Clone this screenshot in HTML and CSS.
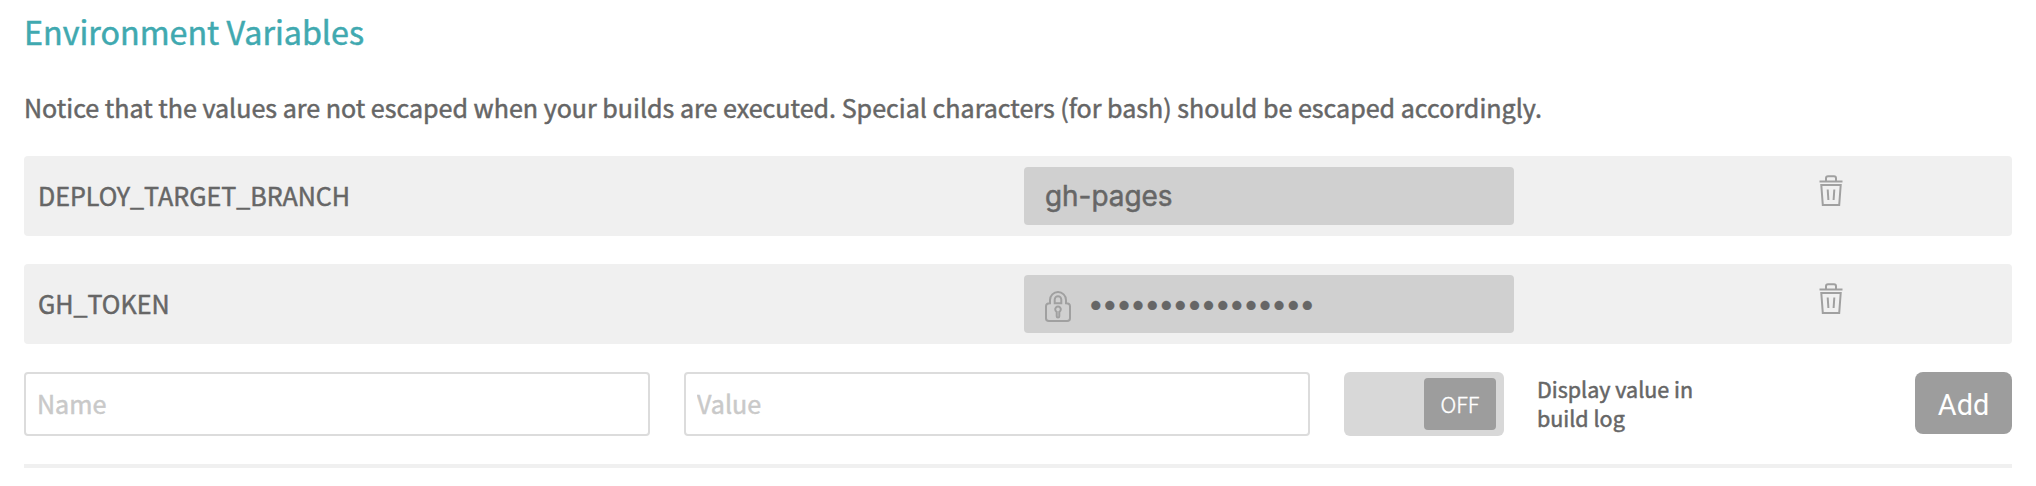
FILE: index.html
```html
<!DOCTYPE html>
<html lang="en">
<head>
<meta charset="utf-8">
<title>Environment Variables</title>
<link rel="stylesheet" href="styles.css">
</head>
<body>
<svg class="sprite" aria-hidden="true">
  <symbol id="trash" viewBox="0 0 24 32">
    <path d="M.5 7.500h23M7 7V4.200q0-2 2-2h6q2 0 2 2V7M2.300 11h19.400L20.200 31H3.800zM8.700 15.500l.7 10.500M15.300 15.500l-.7 10.500"/>
  </symbol>
  <symbol id="lock" viewBox="0 0 26 31">
    <path d="M5 12.200V9a8 8 0 0 1 16 0v3.200q4 .2 4 3v12q0 2.800-2.800 2.800H3.800Q1 30 1 27.200V15.200q0-2.800 4-3zM9.700 12.200V8.500a3.300 3.300 0 0 1 6.600 0v3.700zM11.700 20.800a2.800 2.800 0 1 1 2.600 0v4.400q0 1.200-1.300 1.200t-1.300-1.200z"/>
  </symbol>
</svg>
<main class="settings">
  <h1 class="title">Environment Variables</h1>
  <p class="notice">Notice that the values are not escaped when your builds are executed. Special characters (for bash) should be escaped accordingly.</p>
  <ul class="vars">
    <li class="var">
      <span class="var-name">DEPLOY_TARGET_BRANCH</span>
      <span class="var-value">gh-pages</span>
      <svg class="icon trash"><use href="#trash"/></svg>
    </li>
    <li class="var">
      <span class="var-name">GH_TOKEN</span>
      <span class="var-value"><svg class="icon lock"><use href="#lock"/></svg><span class="secret">••••••••••••••••</span></span>
      <svg class="icon trash"><use href="#trash"/></svg>
    </li>
  </ul>
  <form class="add-form">
    <input class="field" type="text" placeholder="Name">
    <input class="field" type="text" placeholder="Value">
    <div class="switch"><span class="knob">OFF</span></div>
    <span class="switch-label">Display value in build log</span>
    <button class="add" type="button">Add</button>
  </form>
</main>
</body>
</html>
```
FILE: styles.css
```css
* { box-sizing: border-box; }
body {
  margin: 0;
  background: #fff;
  color: #666;
  font-family: "Noto Sans CJK SC", sans-serif;
  font-size: 25.07px;
  -webkit-text-stroke: 0.5px currentColor;
}
.sprite { display: none; }
.settings { padding: 8px 24px 0; }
.title {
  margin: 0;
  color: #40a9b0;
  font-size: 32.25px;
  font-weight: 400;
  line-height: 46px;
}
.notice { margin: 35px 0 31px; line-height: 36px; white-space: nowrap; }
.vars {
  display: grid;
  gap: 28px;
  margin: 0;
  padding: 0;
  list-style: none;
}
.var {
  display: flex;
  align-items: center;
  height: 80px;
  padding-left: 14px;
  border-radius: 4px;
  background: #f0f0f0;
}
.var-name { width: 986px; padding-bottom: 2px; line-height: 36px; }
.var-value {
  display: flex;
  align-items: center;
  width: 490px;
  height: 58px;
  padding-left: 21px;
  border-radius: 4px;
  background: #d0d0d0;
  font-family: Inter, sans-serif;
  font-size: 27.9px;
}
.icon { fill: none; stroke: #a0a0a0; stroke-width: 2; }
.trash { width: 24px; height: 32px; margin: -12px 0 0 305px; }
.lock { width: 26px; height: 31px; margin-top: 5px; }
.secret {
  margin: 4px 0 0 19px;
  font-family: "Liberation Sans", sans-serif;
  font-size: 33px;
  letter-spacing: 2.55px;
  -webkit-text-stroke-width: 0.2px;
}
.add-form {
  display: flex;
  align-items: flex-start;
  margin-top: 28px;
  padding-bottom: 28px;
  border-bottom: 4px solid #f0f0f0;
}
.field {
  width: 626px;
  height: 64px;
  margin-right: 34px;
  padding: 0 10px 2px 11px;
  border: 2px solid #dcdcdc;
  border-radius: 4px;
  background: #fff;
  color: #666;
  font: inherit;
}
.field::placeholder { color: #c9c9c9; opacity: 1; }
.switch {
  display: flex;
  justify-content: flex-end;
  width: 160px;
  height: 64px;
  padding: 6px 8px;
  border-radius: 6px;
  background: #d8d8d8;
}
.knob {
  width: 72px;
  border-radius: 4px;
  background: #9d9d9d;
  color: #fff;
  font-size: 21.7px;
  font-weight: 300;
  line-height: 52px;
  text-align: center;
  -webkit-text-stroke-width: 0.4px;
}
.switch-label {
  width: 180px;
  margin: 2px 0 0 33px;
  font-size: 21.5px;
  line-height: 29px;
}
.add {
  width: 97px;
  height: 62px;
  margin-left: auto;
  padding: 3px 0 0;
  border: 0;
  border-radius: 8px;
  background: #9d9d9d;
  color: #fff;
  font-family: Roboto, sans-serif;
  font-size: 28.8px;
  -webkit-text-stroke-width: 0;
}
```
